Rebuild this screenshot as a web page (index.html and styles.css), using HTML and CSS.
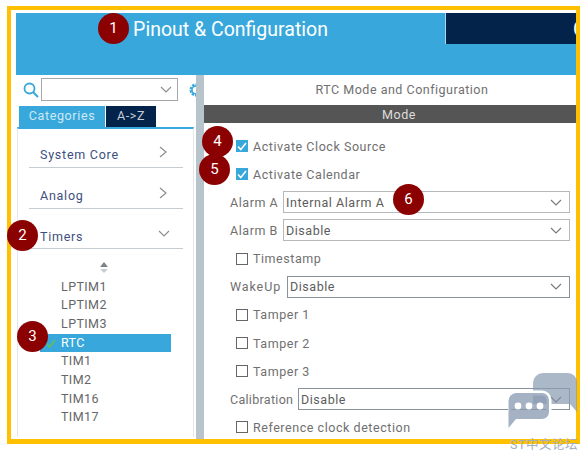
FILE: index.html
```html
<!DOCTYPE html>
<html lang="en">
<head>
    <meta charset="UTF-8">
    <meta name="viewport" content="width=device-width, initial-scale=1.0">
    <title>RTC Mode and Configuration</title>
    <link rel="stylesheet" href="styles.css">
</head>
<body>

<div class="frame">
    <div class="app">

        <!-- Top tabs -->
        <div class="header">
            <div class="tab-active">Pinout &amp; Configuration</div>
            <div class="tab-dark">Clock Configuration</div>
        </div>

        <div class="main">

            <!-- Left panel -->
            <div class="side">
                <div class="search-row">
                    <svg class="search-icon" width="16" height="16" viewBox="0 0 16 16"><circle cx="6.5" cy="6.5" r="5" fill="none" stroke="#38a8dc" stroke-width="1.8"/><path d="M10.2 10.2L15 15" stroke="#38a8dc" stroke-width="2"/></svg>
                    <div class="search-box">
                        <svg width="12" height="7" viewBox="0 0 12 7"><path d="M1 1l5 5 5-5" fill="none" stroke="#8a8f94" stroke-width="1.2"/></svg>
                    </div>
                    <svg class="gear-icon" width="14" height="16" viewBox="0 0 14 16"><circle cx="7" cy="8" r="5" fill="none" stroke="#38a8dc" stroke-width="3" stroke-dasharray="2.2 1"/><circle cx="7" cy="8" r="4" fill="none" stroke="#38a8dc" stroke-width="1.4"/></svg>
                </div>
                <div class="side-tabs">
                    <div class="side-tab on">Categories</div>
                    <div class="side-tab off">A-&gt;Z</div>
                </div>
                <div class="cats">
                    <div class="cat">System Core
                        <svg width="8" height="12" viewBox="0 0 8 12"><path d="M1 1l6 5-6 5" fill="none" stroke="#8a8f94" stroke-width="1.2"/></svg>
                    </div>
                    <div class="cat">Analog
                        <svg width="8" height="12" viewBox="0 0 8 12"><path d="M1 1l6 5-6 5" fill="none" stroke="#8a8f94" stroke-width="1.2"/></svg>
                    </div>
                    <div class="cat">Timers
                        <svg class="down" width="12" height="8" viewBox="0 0 12 8"><path d="M1 1l5 5 5-5" fill="none" stroke="#8a8f94" stroke-width="1.2"/></svg>
                    </div>
                    <div class="scroller">
                        <svg width="10" height="12" viewBox="0 0 10 12"><path d="M5 0l4 5H1z" fill="#7d8387"/><path d="M1 7h8l-4 4z" fill="#c9cdd0"/></svg>
                    </div>
                    <div class="items">
                        <div class="item">LPTIM1</div>
                        <div class="item">LPTIM2</div>
                        <div class="item">LPTIM3</div>
                        <div class="item selected">
                            <svg class="tick" width="10" height="9" viewBox="0 0 10 9"><path d="M1 5l2.5 3L9 1" fill="none" stroke="#5fc05a" stroke-width="1.6"/></svg>
                            RTC
                        </div>
                        <div class="item">TIM1</div>
                        <div class="item">TIM2</div>
                        <div class="item">TIM16</div>
                        <div class="item">TIM17</div>
                    </div>
                </div>
            </div>

            <div class="splitter"></div>

            <!-- Right panel -->
            <div class="content">
                <div class="title">RTC Mode and Configuration</div>
                <div class="mode-bar">Mode</div>
                <div class="rows">
                    <div class="row check"><span class="box on"><svg width="10" height="9" viewBox="0 0 10 9"><path d="M1 4.5l2.8 3L9 1" fill="none" stroke="#fff" stroke-width="1.5"/></svg></span>Activate Clock Source</div>
                    <div class="row check"><span class="box on"><svg width="10" height="9" viewBox="0 0 10 9"><path d="M1 4.5l2.8 3L9 1" fill="none" stroke="#fff" stroke-width="1.5"/></svg></span>Activate Calendar</div>
                    <div class="row"><span class="lbl alarm">Alarm A</span><div class="select">Internal Alarm A<svg width="12" height="7" viewBox="0 0 12 7"><path d="M1 1l5 5 5-5" fill="none" stroke="#777" stroke-width="1.1"/></svg></div></div>
                    <div class="row"><span class="lbl alarm">Alarm B</span><div class="select">Disable<svg width="12" height="7" viewBox="0 0 12 7"><path d="M1 1l5 5 5-5" fill="none" stroke="#777" stroke-width="1.1"/></svg></div></div>
                    <div class="row check"><span class="box"></span>Timestamp</div>
                    <div class="row"><span class="lbl wakeup">WakeUp</span><div class="select dark">Disable<svg width="12" height="7" viewBox="0 0 12 7"><path d="M1 1l5 5 5-5" fill="none" stroke="#777" stroke-width="1.1"/></svg></div></div>
                    <div class="row check"><span class="box"></span>Tamper 1</div>
                    <div class="row check"><span class="box"></span>Tamper 2</div>
                    <div class="row check"><span class="box"></span>Tamper 3</div>
                    <div class="row"><span class="lbl calib">Calibration</span><div class="select dark">Disable<svg width="12" height="7" viewBox="0 0 12 7"><path d="M1 1l5 5 5-5" fill="none" stroke="#555" stroke-width="1.1"/></svg></div></div>
                    <div class="row check"><span class="box"></span>Reference clock detection</div>
                </div>
            </div>
        </div>
    </div>

    <!-- Numbered markers -->
    <div class="badge b1">1</div>
    <div class="badge b2">2</div>
    <div class="badge b3">3</div>
    <div class="badge b4">4</div>
    <div class="badge b5">5</div>
    <div class="badge b6">6</div>
</div>

<!-- Forum watermark -->
<div class="watermark">
    <svg width="72" height="58" viewBox="0 0 72 58">
        <path d="M25 14V10A10 10 0 0 1 35 0H60A9 9 0 0 1 69 9V39L62 31H25Z" fill="#8b9cb3" opacity="0.72"/>
        <path d="M8 20H34A7 7 0 0 1 41 27V39A7 7 0 0 1 34 46H8L0.5 55V28A8 8 0 0 1 8 20Z" fill="none" stroke="#fff" stroke-width="5"/>
        <path d="M8 20H34A7 7 0 0 1 41 27V39A7 7 0 0 1 34 46H8L0.5 55V28A8 8 0 0 1 8 20Z" fill="#8b9cb3" opacity="0.78"/>
        <circle cx="10" cy="33" r="3.4" fill="#fff"/>
        <circle cx="21" cy="33" r="3.4" fill="#fff"/>
        <circle cx="32" cy="33" r="3.4" fill="#fff"/>
    </svg>
    <div class="wm-text">ST中文论坛</div>
</div>

</body>
</html>
```
FILE: styles.css
```css
body {
    margin: 0;
    background-color: white;
    font-family: Roboto, "Noto Sans CJK SC", sans-serif;
    width: 587px;
    height: 456px;
    overflow: hidden;
    position: relative;
}

.frame {
    position: relative;
    box-sizing: border-box;
    width: 573px;
    height: 438px;
    margin: 6px 0 0 7px;
    border: 4px solid #ffc000;
    border-bottom-width: 5px;
    padding: 3px 0 0 5px;
}

.app {
    width: 560px;
    height: 426px;
    overflow: hidden;
}

.header {
    height: 62px;
    background-color: #38a8dc;
    display: flex;
    align-items: flex-start;
}

.tab-active {
    flex: none;
    width: 430px;
    height: 31px;
    line-height: 34px;
    text-align: center;
    color: white;
    font-size: 19.5px;
    border-right: 1px solid #a8d6ee;
    box-sizing: border-box;
}

.tab-dark {
    flex: none;
    width: 300px;
    height: 31px;
    box-sizing: border-box;
    padding-left: 127px;
    line-height: 34px;
    background-color: #03234b;
    color: white;
    font-size: 19.5px;
    white-space: nowrap;
}

.main {
    display: flex;
    height: 364px;
}

/* left panel */
.side {
    width: 180px;
    flex: none;
}

.search-row {
    display: flex;
    align-items: center;
    height: 23px;
    margin-top: 3px;
    padding-left: 7px;
    overflow: hidden;
}

.search-icon {
    flex: none;
}

.search-box {
    flex: none;
    box-sizing: border-box;
    width: 137px;
    height: 23px;
    margin-left: 2px;
    border: 1px solid #a4a8ab;
    display: flex;
    align-items: center;
    justify-content: flex-end;
    padding-right: 5px;
}

.gear-icon {
    margin-left: 11px;
    flex: none;
}

.side-tabs {
    display: flex;
    gap: 1px;
    margin-top: 5px;
    padding-left: 3px;
    height: 21px;
}

.side-tab {
    font-size: 12.5px;
    letter-spacing: 0.65px;
    text-align: center;
    line-height: 20px;
    color: #cfe8f5;
}

.side-tab.on {
    width: 86px;
    background-color: #38a8dc;
}

.side-tab.off {
    width: 50px;
    background-color: #03234b;
    color: #c6ccd6;
}

.cats {
    margin-left: 1px;
    width: 177px;
    height: 310px;
    border-top: 2px solid #38a8dc;
    border-left: 1px solid #e4e8ea;
    border-right: 1px solid #e4e8ea;
    box-sizing: border-box;
    padding-top: 12px;
}

.cat {
    display: flex;
    align-items: center;
    justify-content: space-between;
    box-sizing: border-box;
    width: 154px;
    height: 27px;
    margin: 0 0 13.5px 11px;
    padding: 0 16px 0 11px;
    border-bottom: 1px solid #c4cdd3;
    font-size: 12.5px;
    letter-spacing: 0.75px;
    color: #3e4f7d;
}

.cat + .cat {
    padding-top: 2px;
}

.cat svg {
    margin-top: -5px;
}

.cat svg.down {
    margin-right: -3px;
}

.scroller {
    display: flex;
    justify-content: center;
    width: 172px;
    margin-top: -1px;
}

.items {
    margin-top: 4px;
    margin-left: 22px;
}

.item {
    position: relative;
    width: 131px;
    box-sizing: border-box;
    height: 18.7px;
    line-height: 18.7px;
    padding-left: 21px;
    font-size: 12.5px;
    letter-spacing: 0.4px;
    color: #666;
}

.item.selected {
    background-color: #38a8dc;
    color: white;
}

.tick {
    position: absolute;
    left: 6px;
    top: 5px;
}

.splitter {
    width: 8px;
    flex: none;
    background-color: #b8c4cc;
}

/* right panel */
.content {
    flex: none;
    width: 372px;
}

.title {
    height: 30px;
    line-height: 30px;
    padding-left: 24px;
    text-align: center;
    font-size: 12.5px;
    letter-spacing: 0.5px;
    color: #707070;
}

.mode-bar {
    height: 18px;
    line-height: 19px;
    padding-left: 18px;
    text-align: center;
    background-color: #555;
    color: #ddd;
    font-size: 12.5px;
    letter-spacing: 0.6px;
}

.rows {
    display: grid;
    grid-auto-rows: 28.15px;
    padding: 9px 6px 0 26px;
}

.row {
    display: flex;
    align-items: center;
    gap: 1px;
    font-size: 12.5px;
    letter-spacing: 0.55px;
    color: #707070;
    white-space: nowrap;
}

.row.check {
    padding-left: 6px;
    gap: 5px;
}

.lbl {
    flex: none;
}

.lbl.alarm {
    width: 52px;
}

.lbl.wakeup {
    width: 56px;
    letter-spacing: 0.9px;
}

.lbl.calib {
    width: 67px;
    letter-spacing: 0.3px;
}

.box {
    box-sizing: border-box;
    width: 12px;
    height: 12px;
    border: 1px solid #666;
    display: flex;
    align-items: center;
    justify-content: center;
    flex: none;
}

.box.on {
    background-color: #38a8dc;
    border-color: #38a8dc;
}

.select {
    flex: 1;
    box-sizing: border-box;
    height: 22px;
    padding: 0 7px 0 2px;
    border: 1px solid #b5b9bc;
    display: flex;
    align-items: center;
    justify-content: space-between;
    color: #5c5c5c;
}

.select.dark {
    border-color: #87929a;
}

/* markers */
.badge {
    position: absolute;
    width: 31px;
    height: 31px;
    border-radius: 50%;
    background-color: #8b0000;
    color: white;
    font-size: 15px;
    line-height: 30px;
    text-align: center;
}

.b1 { left: 87px; top: 3px; }
.b2 { left: -4px; top: 210px; }
.b3 { left: 6px; top: 311px; }
.b4 { left: 191px; top: 116px; }
.b5 { left: 188px; top: 144px; }
.b6 { left: 382px; top: 174px; }

.watermark {
    position: absolute;
    left: 508px;
    top: 373px;
    width: 79px;
}

.watermark svg {
    display: block;
}

.wm-text {
    margin-top: 3px;
    margin-left: 2px;
    font-size: 12.5px;
    letter-spacing: 0.5px;
    color: #a3afbf;
    white-space: nowrap;
}
```
